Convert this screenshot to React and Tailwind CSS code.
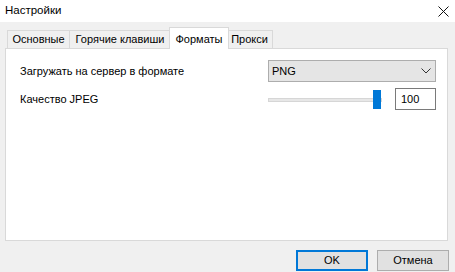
function Tab({ label, active, first, w }) {
    if (active) {
        return (
            <div
                className="relative z-10 -mx-[2px] -mb-px flex h-[22px] items-start justify-center border border-b-0 border-[#d9d9d9] bg-white pt-[3px]"
                style={{ width: w + 4 }}
            >
                {label}
            </div>
        );
    }
    return (
        <div
            className={`flex h-[18px] items-center justify-center border border-b-0 border-[#d9d9d9] bg-[#f0f0f0] ${first ? "" : "-ml-px"}`}
            style={{ width: w }}
        >
            {label}
        </div>
    );
}

export default function App() {
    return (
        <div
            className="flex h-[272px] w-[455px] flex-col bg-[#f0f0f0] text-[11px] text-black"
            style={{ fontFamily: '"Segoe UI", "Liberation Sans", sans-serif' }}
        >
            <div className="flex h-[22px] items-center justify-between bg-white pl-[5px] pr-[5px]">
                <span className="text-[11.5px]">Настройки</span>
                <svg width="11" height="11" viewBox="0 0 11 11" className="mr-[1px]">
                    <path d="M0.5 0.5 L10.5 10.5 M10.5 0.5 L0.5 10.5" stroke="#111" strokeWidth="1" />
                </svg>
            </div>

            <div className="flex flex-1 flex-col px-[5px] pt-[5px]">
                <div className="flex h-[21px] items-end pl-[2px]">
                    <Tab label="Основные" w={63} first />
                    <Tab label="Горячие клавиши" w={102} />
                    <Tab label="Форматы" w={56} active />
                    <Tab label="Прокси" w={47} />
                </div>
                <div className="h-[193px] w-[443px] border border-[#d9d9d9] bg-white pl-[14px] pr-[11px] pt-[11px]">
                    <div className="flex h-[22px] items-center justify-between">
                        <span>Загружать на сервер в формате</span>
                        <div className="flex h-[22px] w-[168px] items-center justify-between border border-[#adadad] bg-[#e5e5e5] pl-[3px] pr-[4px]">
                            <span>PNG</span>
                            <svg width="10" height="6" viewBox="0 0 10 6">
                                <path d="M0.5 0.5 L5 5 L9.5 0.5" stroke="#333" strokeWidth="1" fill="none" />
                            </svg>
                        </div>
                    </div>
                    <div className="mt-[6px] flex h-[22px] items-center justify-between">
                        <span>Качество JPEG</span>
                        <div className="flex items-center">
                            <div className="relative h-[19px] w-[114px]">
                                <div className="absolute left-0 right-0 top-[8px] h-[4px] border border-[#d6d6d6] bg-[#e7e7e7]" />
                                <div className="absolute right-[1px] top-0 h-[19px] w-[8px] bg-[#0078d7]" />
                            </div>
                            <div className="ml-[13px] flex h-[22px] w-[41px] items-center border border-[#7a7a7a] bg-white pl-[5px]">
                                100
                            </div>
                        </div>
                    </div>
                </div>
                <div className="mt-[9px] flex justify-end gap-[9px] pr-[1px]">
                    <div className="flex h-[21px] w-[72px] items-center justify-center border-2 border-[#0078d7] bg-[#e1e1e1]">
                        OK
                    </div>
                    <div className="flex h-[21px] w-[72px] items-center justify-center border border-[#adadad] bg-[#e1e1e1]">
                        Отмена
                    </div>
                </div>
            </div>
        </div>
    );
}
